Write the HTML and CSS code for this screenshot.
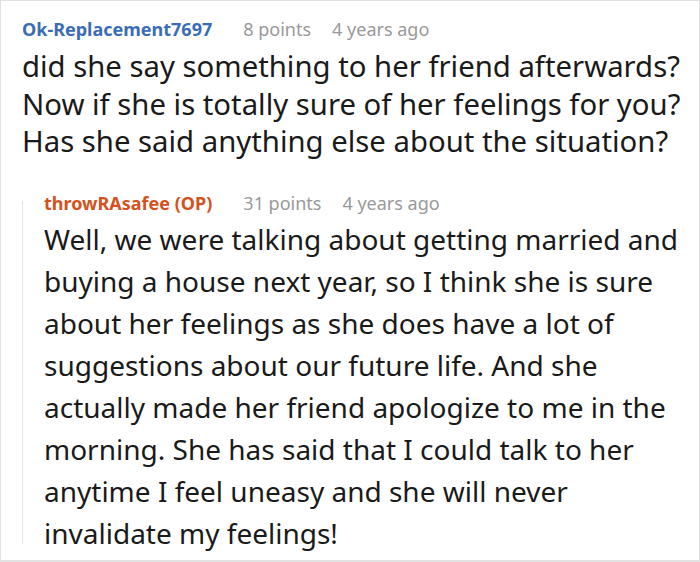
FILE: index.html
```html
<!DOCTYPE html>
<html>
<head>
<meta charset="utf-8">
<link rel="stylesheet" href="styles.css">
</head>
<body>
<div class="frame">
  <div class="comment">
    <div class="meta">
      <span class="author">Ok-Replacement7697</span>
      <span class="points">8 points</span>
      <span class="time">4 years ago</span>
    </div>
    <div class="body first">did she say something to her friend afterwards? Now if she is totally sure of her feelings for you? Has she said anything else about the situation?</div>
    <div class="reply">
      <div class="rail"></div>
      <div class="meta">
        <span class="author op">throwRAsafee (OP)</span>
        <span class="points">31 points</span>
        <span class="time">4 years ago</span>
      </div>
      <div class="body second">Well, we were talking about getting married and buying a house next year, so I think she is sure about her feelings as she does have a lot of suggestions about our future life. And she actually made her friend apologize to me in the morning. She has said that I could talk to her anytime I feel uneasy and she will never invalidate my feelings!</div>
    </div>
  </div>
</div>
</body>
</html>
```

FILE: styles.css
```css
html, body {
  margin: 0;
  padding: 0;
  background: #fff;
}
.frame {
  width: 700px;
  height: 562px;
  box-sizing: border-box;
  border: 1px solid #e2e2e2;
  border-bottom-width: 2px;
  overflow: hidden;
  font-family: "Noto Sans", "Open Sans", sans-serif;
  color: #1a1a1a;
}
.comment {
  padding: 16px 0 0 21px;
}
.meta {
  display: flex;
  font-size: 18px;
  line-height: 24px;
}
.author {
  font-weight: 700;
  color: #3a6db5;
  margin-right: 31px;
}
.author.op {
  color: #d4521e;
}
.points {
  color: #999;
  margin-right: 21px;
}
.time {
  color: #999;
}
.body.first {
  font-size: 29.3px;
  line-height: 37.5px;
  margin-top: 7px;
  padding-right: 6px;
}
.reply {
  margin-top: 30px;
  display: grid;
  grid-template-columns: 1px 1fr;
  column-gap: 21px;
}
.rail {
  grid-row: 1 / span 2;
  margin: 10px 0 10px;
  background: #e4e4e4;
}
.body.second {
  font-size: 28px;
  line-height: 42px;
  margin-top: 3px;
  padding-right: 6px;
}
```
